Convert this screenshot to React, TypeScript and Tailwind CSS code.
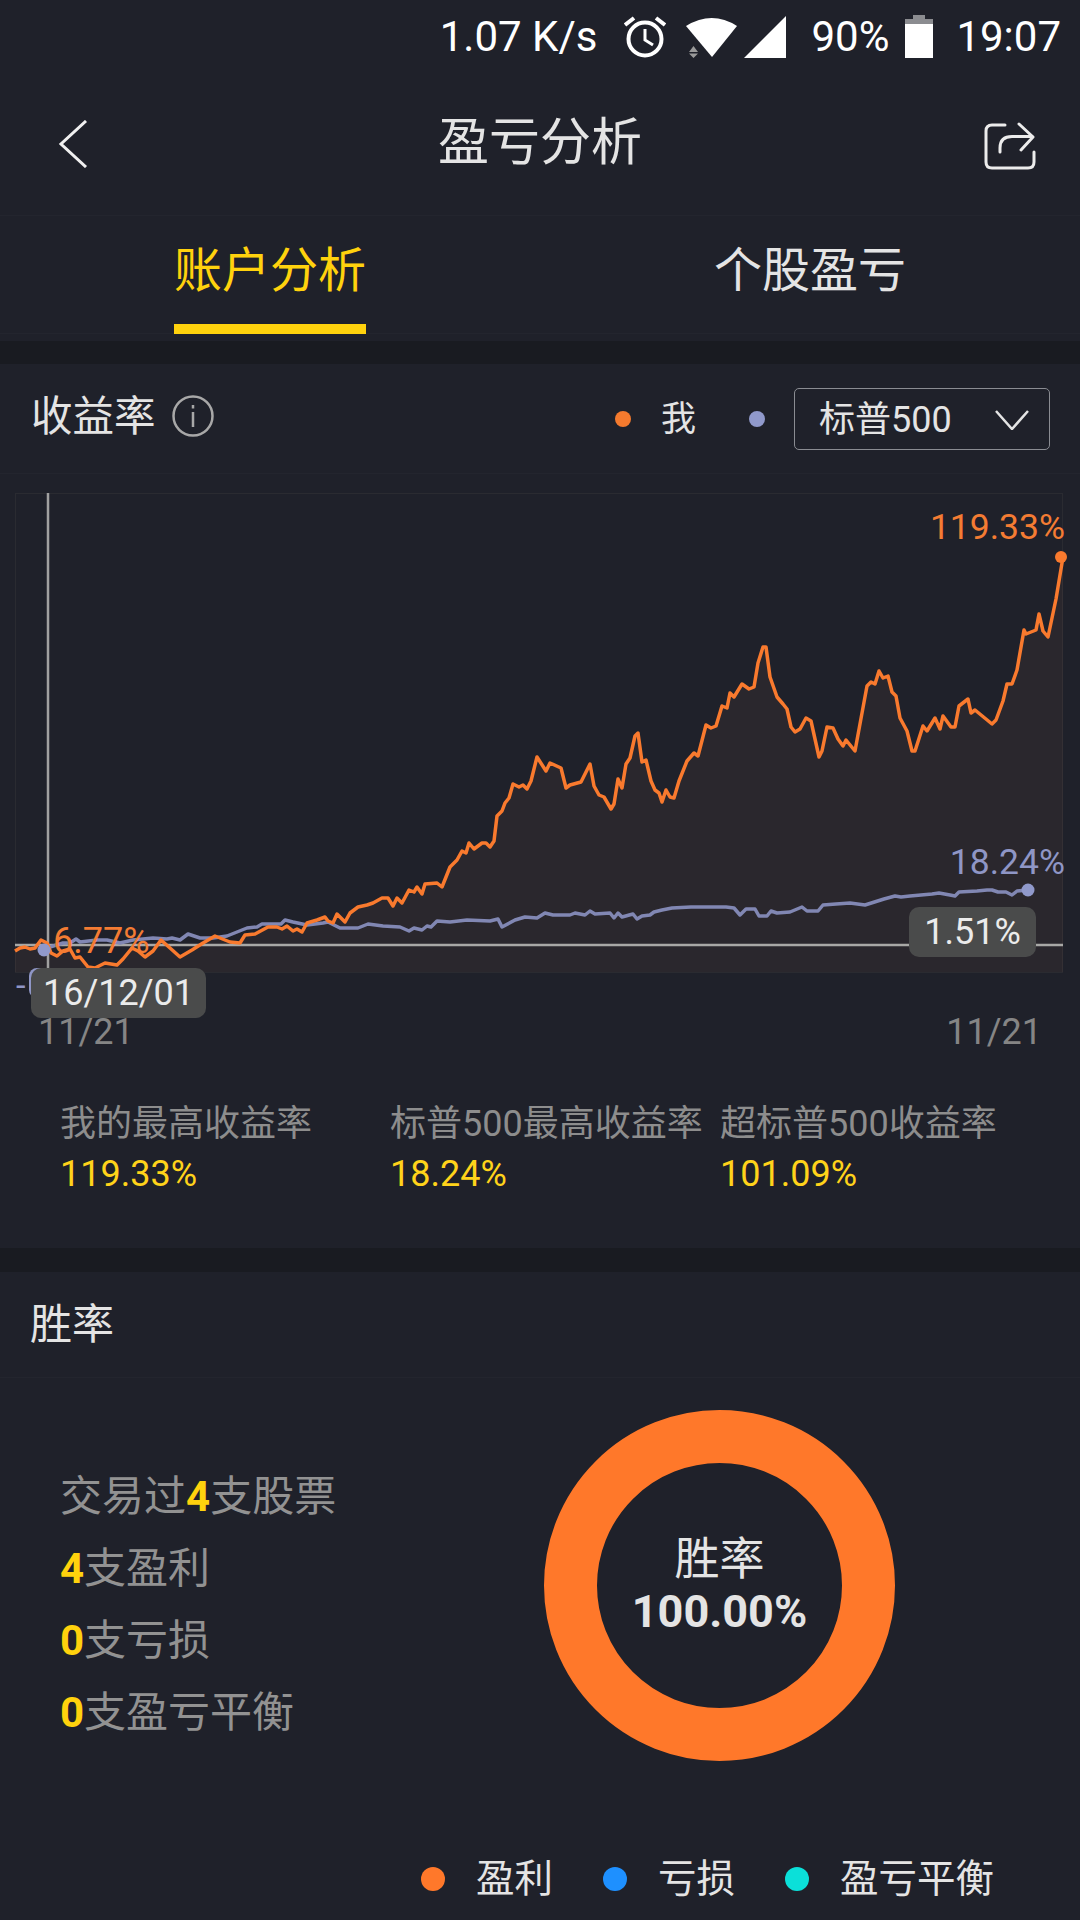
import React from 'react';

const FONT = 'font-[Roboto,"Noto_Sans_CJK_SC",sans-serif]';

const orangeLine =
  '15,950 20,947 25,946 30,948 35,947 41,939 47,942 51,952 57,955 63,950 70,948 75,957 80,956 88,966 95,967 105,962 117,964 123,958 132,947 138,950 145,956 153,950 161,939 170,947 180,956 192,949 203,942 215,935 230,941 240,942 245,934 255,933 268,926 277,926 282,928 287,925 293,930 297,928 302,931 307,922 317,919 325,916 328,920 333,922 337,913 345,921 350,912 358,906 367,904 373,902 382,897 388,897 393,905 397,897 402,902 409,889 414,891 417,886 422,893 425,883 437,882 442,886 450,866 457,859 462,850 466,852 469,842 474,848 482,842 486,842 490,846 494,840 497,815 502,810 505,802 509,797 513,783 519,786 523,784 527,788 531,780 537,756 546,770 550,762 561,767 566,787 570,784 581,781 590,763 594,785 599,794 604,796 611,808 614,803 618,778 622,787 626,763 630,757 635,735 638,732 642,761 646,759 651,780 655,789 659,792 662,801 666,789 670,796 674,797 679,780 687,760 694,752 698,755 706,724 711,727 716,725 722,705 727,707 730,692 734,696 742,683 749,688 754,686 758,662 763,646 766,646 770,676 777,696 783,703 787,708 791,726 795,731 800,728 806,717 811,720 819,756 822,750 827,726 833,727 838,738 843,745 846,739 855,750 867,685 871,681 875,683 879,670 883,677 888,675 892,691 896,695 900,717 907,730 912,750 915,750 923,725 927,730 935,717 940,728 943,715 951,726 955,726 959,705 968,698 971,712 975,709 992,723 996,719 1003,700 1007,683 1012,683 1017,669 1024,629 1026,633 1036,629 1039,613 1043,630 1048,636 1056,598 1063,556';

const blueLine =
  '44,949 50,946 63,942 70,942 76,938 80,941 97,939 107,939 120,942 133,939 143,938 153,937 167,938 172,937 180,939 188,933 200,937 213,937 227,935 247,927 257,926 262,923 277,923 281,923 285,919 293,921 307,924 323,922 328,921 340,927 358,927 368,923 383,925 400,926 409,930 414,927 422,929 427,925 431,926 437,920 450,921 467,919 490,920 498,918 502,926 515,919 525,916 537,917 545,912 553,914 570,914 575,912 585,914 590,910 595,913 610,912 614,917 618,912 622,916 633,913 637,918 642,915 650,914 654,911 662,909 672,907 691,906 726,906 734,907 740,914 746,908 755,908 759,915 767,915 771,910 777,912 790,911 802,906 807,910 818,910 823,904 836,903 850,902 865,904 884,898 895,895 901,896 910,895 932,893 939,892 950,894 955,895 959,891 977,890 987,889 992,889 998,891 1006,891 1012,894 1017,890 1028,889';

const AlarmIcon = () => (
  <svg width="42" height="42" viewBox="0 0 42 42" fill="none" stroke="white" strokeWidth="4">
    <circle cx="21" cy="23" r="16.5" />
    <path d="M21 13V24L29 29" strokeWidth="3" />
    <path d="M1 9L10 2M41 9L32 2" strokeWidth="4" />
  </svg>
);

const WifiIcon = () => (
  <svg width="51" height="42" viewBox="0 0 51 42" fill="white">
    <path d="M0 10Q26 -6 51 10L26 41Z" />
    <path d="M3 36L7.5 30L12 36Z M3 37.5H12L7.5 42Z" fill="#9a9a9a" />
  </svg>
);

const SignalIcon = () => (
  <svg width="42" height="42" viewBox="0 0 42 42" fill="white">
    <path d="M42 0V42H0Z" />
  </svg>
);

const BatteryIcon = () => (
  <div className="flex w-[28px] flex-col items-center">
    <div className="h-[4px] w-[12px] bg-[#8b8c90]" />
    <div className="h-[5px] w-[28px] bg-[#8b8c90]" />
    <div className="h-[34px] w-[28px] bg-white" />
  </div>
);

const ShareIcon = () => (
  <svg
    className="mt-[6px]"
    width="52"
    height="48"
    viewBox="0 0 52 48"
    fill="none"
    stroke="#ececec"
    strokeWidth="3"
    strokeLinecap="round"
    strokeLinejoin="round"
  >
    <path d="M21 3H8Q2 3 2 9V40Q2 46 8 46H44Q50 46 50 40V30" />
    <path d="M35 2L49 15L37 28" />
    <path d="M48 14.5H28Q16 14.5 16 26V30" />
  </svg>
);

const Chart = () => (
  <div className="relative mx-[15px] mt-[19px] h-[480px] w-[1048px] border border-[#2a2b31]">
    <svg className="absolute left-[-1px] top-[-1px] overflow-visible" width="1048" height="480" viewBox="15 492 1048 480">
      <polygon points={`${orangeLine} 1063,971 15,971`} fill="#ffa070" fillOpacity="0.05" />
      <line x1="15" y1="944" x2="1063" y2="944" stroke="#a8a8a6" strokeWidth="2.5" />
      <line x1="48" y1="492" x2="48" y2="972" stroke="#a0a0a0" strokeWidth="2.5" />
      <polyline points={blueLine} fill="none" stroke="#8187b3" strokeWidth="3.5" strokeLinejoin="round" />
      <polyline points={orangeLine} fill="none" stroke="#f97a2e" strokeWidth="3.5" strokeLinejoin="round" />
      <circle cx="1061" cy="556" r="6" fill="#f97a2e" />
      <circle cx="1028" cy="889" r="6.5" fill="#9099cb" />
      <circle cx="44" cy="949" r="6.5" fill="#9099cb" />
    </svg>

    {/* value labels lying over the chart */}
    <span className="absolute right-[-3px] top-[12px] text-[35.5px] leading-[42px] text-[#f47c33]">119.33%</span>
    <span className="absolute right-[-3px] top-[347px] text-[35.5px] leading-[42px] text-[#8f96c6]">18.24%</span>
    <span className="absolute left-[37px] top-[426px] text-[36px] leading-[42px] text-[#f47c33]">6.77%</span>

    <div className="absolute left-[893px] top-[413px] flex h-[50px] w-[127px] items-center justify-center rounded-[10px] bg-[#4a4b4b] text-[36px] text-[#ebebeb]">
      1.51%
    </div>
    <span className="absolute left-[0px] top-[470px] text-[34.5px] leading-[42px] text-[#8f96c6]">-</span>
    <div className="absolute left-[13px] top-[474px] h-[30px] w-[30px] rounded-[8px] bg-[#8f96c6]" />
    <div className="absolute left-[15px] top-[474px] flex h-[50px] w-[175px] items-center justify-center rounded-[10px] bg-[#4a4b4b] text-[36px] text-[#ebebeb]">
      16/12/01
    </div>
  </div>
);

const Stat = ({ label, value }: { label: string; value: string }) => (
  <div className="whitespace-nowrap">
    <div className="text-[36px] leading-[50px] text-[#8d8d8d]">{label}</div>
    <div className="text-[36px] leading-[50px] text-[#ffd31a]">{value}</div>
  </div>
);

const Count = ({ n }: { n: string }) => <span className="font-bold text-[#ffd20d]">{n}</span>;

const LegendItem = ({ color, label, className }: { color: string; label: string; className?: string }) => (
  <div className={`flex items-center gap-[31px] ${className ?? ''}`}>
    <div className={`h-[24px] w-[24px] rounded-full ${color}`} />
    <span className="text-[38.5px] leading-[50px] text-[#e4e4e4]">{label}</span>
  </div>
);

export default function App() {
  return (
    <div className={`flex h-[1920px] w-[1080px] flex-col overflow-hidden bg-[#1f212a] ${FONT}`}>
      {/* Status bar */}
      <div className="flex h-[70px] items-center justify-end pr-[19px] pt-[3px] text-[42px] leading-none text-white">
        <span className="mr-[27px]">1.07 K/s</span>
        <AlarmIcon />
        <div className="ml-[20px] mr-[7px]">
          <WifiIcon />
        </div>
        <SignalIcon />
        <span className="ml-[25px] mr-[16px]">90%</span>
        <BatteryIcon />
        <span className="ml-[23px]">19:07</span>
      </div>

      {/* Nav */}
      <div className="flex h-[146px] items-center border-b border-[#23252e] px-[44px]">
        <div className="flex-1">
          <svg className="ml-[14px] mt-[3px]" width="30" height="48" viewBox="0 0 30 48" fill="none" stroke="#f0f0f0" strokeWidth="3">
            <path d="M28 1L3 24L28 47" />
          </svg>
        </div>
        <h1 className="text-[51px] leading-none text-[#e4e4e4]">盈亏分析</h1>
        <div className="flex flex-1 justify-end">
          <ShareIcon />
        </div>
      </div>

      {/* Tabs */}
      <div className="grid h-[118px] grid-cols-2 border-b border-[#23252e]">
        <div className="relative flex items-center justify-center pb-[8px] text-[48px] text-[#ffd20d]">
          账户分析
          <div className="absolute bottom-[-1px] left-[174px] h-[10px] w-[192px] bg-[#ffd20d]" />
        </div>
        <div className="flex items-center justify-center pb-[8px] text-[48px] text-[#e4e4e4]">个股盈亏</div>
      </div>
      <div className="mt-[7px] h-[23px] bg-[#191b21]" />

      {/* Return rate section */}
      <div className="flex h-[110px] items-center border-b border-[#23252e] pl-[31px] pr-[30px]">
        <span className="mb-[3px] text-[41.5px] text-[#e4e4e4]">收益率</span>
        <svg className="mb-[5px] ml-[16px]" width="42" height="42" viewBox="0 0 42 42" fill="none" stroke="#a8a8a8" strokeWidth="2.5">
          <circle cx="21" cy="21" r="19.5" />
          <path d="M21 17V32M21 10V13.5" />
        </svg>
        <div className="ml-auto h-[16px] w-[16px] rounded-full bg-[#f47a2e]" />
        <span className="ml-[30px] mt-[3px] text-[35px] text-[#e4e4e4]">我</span>
        <div className="ml-[53px] h-[16px] w-[16px] rounded-full bg-[#9099cb]" />
        <div className="ml-[29px] flex h-[62px] w-[256px] items-center justify-between rounded-[5px] border border-[#8a8c92] pl-[24px] pr-[20px]">
          <span className="mt-[2px] text-[36px] text-[#e4e4e4]">标普500</span>
          <svg className="mt-[2px]" width="34" height="20" viewBox="0 0 34 20" fill="none" stroke="#e4e4e4" strokeWidth="2.5">
            <path d="M1 1L17 19L33 1" />
          </svg>
        </div>
      </div>

      <Chart />

      {/* Axis */}
      <div className="mt-[39px] flex justify-between pl-[38px] pr-[38px] text-[36px] leading-[40px] text-[#858585]">
        <span>11/21</span>
        <span>11/21</span>
      </div>

      {/* Stats */}
      <div className="mt-[47px] grid grid-cols-[330px_330px_1fr] pl-[60px]">
        <Stat label="我的最高收益率" value="119.33%" />
        <Stat label="标普500最高收益率" value="18.24%" />
        <Stat label="超标普500收益率" value="101.09%" />
      </div>
      <div className="mt-[49px] h-[24px] bg-[#191b21]" />

      {/* Win rate section */}
      <div className="flex h-[106px] items-center border-b border-[#23252e] pl-[30px]">
        <span className="text-[42px] text-[#e4e4e4]">胜率</span>
      </div>

      <div className="flex pt-[32px]">
        <div className="w-[544px] pl-[60px] pt-[51px] text-[42px] leading-[72px] text-[#929292]">
          <div>
            交易过
            <Count n="4" />
            支股票
          </div>
          <div>
            <Count n="4" />
            支盈利
          </div>
          <div>
            <Count n="0" />
            支亏损
          </div>
          <div>
            <Count n="0" />
            支盈亏平衡
          </div>
        </div>
        <div className="flex h-[351px] w-[351px] flex-col items-center justify-center rounded-full border-[53px] border-[#ff782a] text-[#e4e4e4]">
          <div className="text-[45px] leading-[54px]">胜率</div>
          <div className="mt-[-2px] text-[45px] font-bold leading-[54px]">100.00%</div>
        </div>
      </div>

      {/* Legend */}
      <div className="mt-[93px] flex pl-[421px]">
        <LegendItem color="bg-[#ff782a]" label="盈利" />
        <LegendItem color="bg-[#1e90ff]" label="亏损" className="ml-[50px]" />
        <LegendItem color="bg-[#0be0d9]" label="盈亏平衡" className="ml-[50px]" />
      </div>
    </div>
  );
}
